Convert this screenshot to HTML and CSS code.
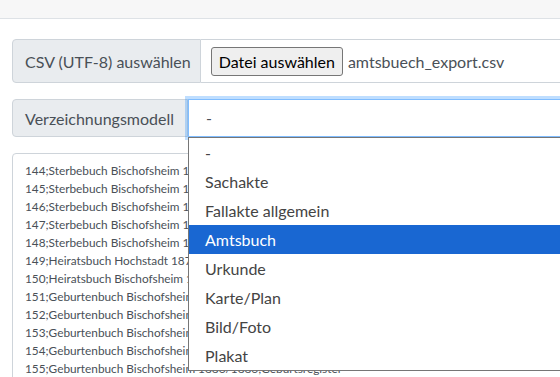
FILE: index.html
```html
<!DOCTYPE html>
<html>
<head>
    <title>CSV Import</title>
    <link rel="stylesheet" href="styles.css">
</head>
<body>
    <div class="topbar"></div>

    <div class="container">
        <div class="input-group file-group">
            <span class="addon">CSV (UTF-8) auswählen</span>
            <div class="file-field">
                <span class="file-btn">Datei auswählen</span>
                <span class="file-name">amtsbuech_export.csv</span>
            </div>
        </div>

        <div class="input-group">
            <span class="addon">Verzeichnungsmodell</span>
            <div class="select-wrap">
                <div class="select">-</div>
                <ul class="options">
                    <li>-</li>
                    <li>Sachakte</li>
                    <li>Fallakte allgemein</li>
                    <li class="selected">Amtsbuch</li>
                    <li>Urkunde</li>
                    <li>Karte/Plan</li>
                    <li>Bild/Foto</li>
                    <li>Plakat</li>
                </ul>
            </div>
        </div>

        <div class="csv-preview">
            <div>144;Sterbebuch Bischofsheim 1876/1876;Sterberegister</div>
            <div>145;Sterbebuch Bischofsheim 1877/1877;Sterberegister</div>
            <div>146;Sterbebuch Bischofsheim 1878/1878;Sterberegister</div>
            <div>147;Sterbebuch Bischofsheim 1879/1879;Sterberegister</div>
            <div>148;Sterbebuch Bischofsheim 1880/1880;Sterberegister</div>
            <div>149;Heiratsbuch Hochstadt 1876/1876;Heiratsregister</div>
            <div>150;Heiratsbuch Bischofsheim 1876/1876;Heiratsregister</div>
            <div>151;Geburtenbuch Bischofsheim 1882/1882;Geburtsregister</div>
            <div>152;Geburtenbuch Bischofsheim 1883/1883;Geburtsregister</div>
            <div>153;Geburtenbuch Bischofsheim 1884/1884;Geburtsregister</div>
            <div>154;Geburtenbuch Bischofsheim 1885/1885;Geburtsregister</div>
            <div>155;Geburtenbuch Bischofsheim 1886/1886;Geburtsregister</div>
        </div>
    </div>
</body>
</html>
```

FILE: styles.css
```css
body {
    margin: 0;
    font-family: 'Lato', 'Open Sans', sans-serif;
    font-size: 16px;
    color: #495057;
    background: #fff;
    overflow: hidden;
    width: 560px;
    height: 377px;
}

.topbar {
    height: 18px;
    background: #f7f7f7;
    border-bottom: 1px solid #dee2e6;
}

.container {
    padding: 20px 0 0 12px;
    width: 760px;
}

/* Input groups */
.input-group {
    display: flex;
    margin-bottom: 16px;
}

.addon {
    display: flex;
    align-items: center;
    padding: 0 13px 0 12px;
    height: 36px;
    background: #e9ecef;
    border: 1px solid #ced4da;
    border-radius: 4px 0 0 4px;
    white-space: nowrap;
}

.file-group .addon {
    height: 42px;
    padding-right: 9px;
}

.file-field {
    flex: 1;
    display: flex;
    align-items: center;
    gap: 5px;
    padding: 0 10px;
    border: 1px solid #ced4da;
    border-left: none;
}

.file-btn {
    display: inline-block;
    padding: 4px 7px 4px;
    background: #efefef;
    border: 1px solid #767676;
    border-radius: 3px;
    color: #000;
}

.file-name {
    color: #495057;
}

/* Select with opened list */
.select-wrap {
    flex: 1;
    position: relative;
}

.select {
    height: 36px;
    line-height: 36px;
    padding: 0 17px;
    border: 1px solid #80bdff;
    box-shadow: 0 0 0 3px rgba(0, 123, 255, 0.25);
}

.options {
    position: absolute;
    top: 38px;
    left: 0;
    right: 0;
    margin: 0;
    padding: 0;
    list-style: none;
    background: #fff;
    border: 1px solid #767676;
    color: #444;
    z-index: 2;
}

.options li {
    height: 29px;
    line-height: 29px;
    padding-left: 16px;
}

.options li.selected {
    background: #1967d2;
    color: #fff;
}

/* CSV preview */
.csv-preview {
    border: 1px solid #ced4da;
    border-radius: 4px;
    padding: 8px 12px;
    font-size: 11.8px;
    line-height: 18px;
    height: 300px;
}
```
